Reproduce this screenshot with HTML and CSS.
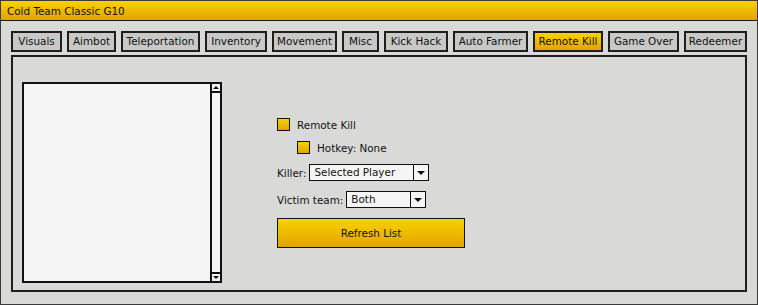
FILE: index.html
```html
<!doctype html>
<html>
<head>
<meta charset="UTF-8">
<title>Cold Team Classic G10</title>
<link rel="stylesheet" href="styles.css">
</head>
<body>
	<div class="window">
		<div class="titlebar">Cold Team Classic G10</div>
		<div class="content">
			<div class="tabs">
				<div class="tab w51">Visuals</div>
				<div class="tab w49">Aimbot</div>
				<div class="tab w79">Teleportation</div>
				<div class="tab w62">Inventory</div>
				<div class="tab w65">Movement</div>
				<div class="tab w37">Misc</div>
				<div class="tab w64">Kick Hack</div>
				<div class="tab w75">Auto Farmer</div>
				<div class="tab w70 active">Remote Kill</div>
				<div class="tab w71">Game Over</div>
				<div class="tab w63">Redeemer</div>
			</div>
			<div class="panel">
				<div class="listbox">
					<div class="list_items"></div>
					<div class="scrollbar">
						<div class="scroll_btn"><span class="arrow_up"></span></div>
						<div class="scroll_track"></div>
						<div class="scroll_btn"><span class="arrow_down"></span></div>
					</div>
				</div>
				<div class="controls">
					<div class="check_row">
						<span class="checkbox"></span>
						<span>Remote Kill</span>
					</div>
					<div class="check_row sub">
						<span class="checkbox"></span>
						<span>Hotkey: None</span>
					</div>
					<div class="field_row">
						<span>Killer:</span>
						<div class="select wide">
							<span class="select_value">Selected Player</span>
							<span class="select_arrow"><span class="arrow_down"></span></span>
						</div>
					</div>
					<div class="field_row">
						<span>Victim team:</span>
						<div class="select narrow">
							<span class="select_value">Both</span>
							<span class="select_arrow"><span class="arrow_down"></span></span>
						</div>
					</div>
					<div class="button">Refresh List</div>
				</div>
			</div>
		</div>
	</div>
</body>
</html>
```

FILE: styles.css
```css
* {
	box-sizing: border-box;
	font-family: "DejaVu Sans", Verdana, sans-serif;
}
body {
	margin: 0;
	font-size: 10.4px;
	color: #111111;
}
.window {
	width: 758px;
	height: 305px;
	border: 1px solid #3a3a3a;
	background-color: #d9dad8;
}
.titlebar {
	height: 20px;
	padding: 4px 0 0 6px;
	line-height: 13px;
	background: linear-gradient(#f8d200, #e3a300);
	border-bottom: 1px solid #1a1a1a;
}
.content {
	padding: 10px 10px 0 10px;
}
.tabs {
	display: flex;
	gap: 5px;
}
.tab {
	height: 21px;
	line-height: 17px;
	text-align: center;
	white-space: nowrap;
	background-color: #c8c9c7;
	border: 2px solid #1e1e1e;
}
.w37 { width: 37px; }
.w49 { width: 49px; }
.w51 { width: 51px; }
.w62 { width: 62px; }
.w63 { width: 63px; }
.w64 { width: 64px; }
.w65 { width: 65px; }
.w70 { width: 70px; }
.w71 { width: 71px; }
.w75 { width: 75px; }
.w79 { width: 79px; }
.tab.active {
	background: linear-gradient(#f8d200, #e3a300);
}
.panel {
	display: flex;
	margin-top: 3px;
	height: 237px;
	padding: 25px 0 0 9px;
	border: 2px solid #1e1e1e;
}
.listbox {
	display: flex;
	width: 200px;
	height: 201px;
	border: 2px solid #111111;
	background-color: #f5f5f5;
}
.list_items {
	flex: 1;
}
.scrollbar {
	display: flex;
	flex-direction: column;
	width: 10px;
	border-left: 2px solid #111111;
}
.scroll_btn {
	display: flex;
	align-items: center;
	justify-content: center;
	height: 9px;
	border-bottom: 2px solid #111111;
}
.scroll_btn:last-child {
	border-bottom: 0;
	border-top: 2px solid #111111;
}
.scroll_track {
	flex: 1;
}
.arrow_up {
	border-left: 3px solid transparent;
	border-right: 3px solid transparent;
	border-bottom: 3px solid #111111;
}
.arrow_down {
	border-left: 3px solid transparent;
	border-right: 3px solid transparent;
	border-top: 3px solid #111111;
}
.select_arrow .arrow_down {
	border-left-width: 4px;
	border-right-width: 4px;
	border-top-width: 4px;
}
.controls {
	display: flex;
	flex-direction: column;
	gap: 10px;
	margin-left: 55px;
	padding-top: 36px;
}
.check_row {
	display: flex;
	align-items: center;
	gap: 7px;
	height: 13px;
}
.check_row.sub {
	margin-left: 20px;
}
.checkbox {
	width: 13px;
	height: 13px;
	border: 1px solid #111111;
	background: linear-gradient(#f8d200, #e3a300);
}
.field_row {
	display: flex;
	align-items: center;
	gap: 3px;
}
.select {
	display: flex;
	height: 17px;
	border: 1px solid #111111;
	background-color: #f5f5f5;
}
.select.wide {
	width: 120px;
}
.select.narrow {
	width: 80px;
}
.select_value {
	flex: 1;
	padding-left: 4px;
	line-height: 15px;
}
.select_arrow {
	display: flex;
	align-items: center;
	justify-content: center;
	width: 15px;
	border-left: 1px solid #111111;
}
.button {
	width: 188px;
	height: 30px;
	border: 1px solid #111111;
	line-height: 28px;
	text-align: center;
	background: linear-gradient(#f8d200, #e3a300);
}
```
